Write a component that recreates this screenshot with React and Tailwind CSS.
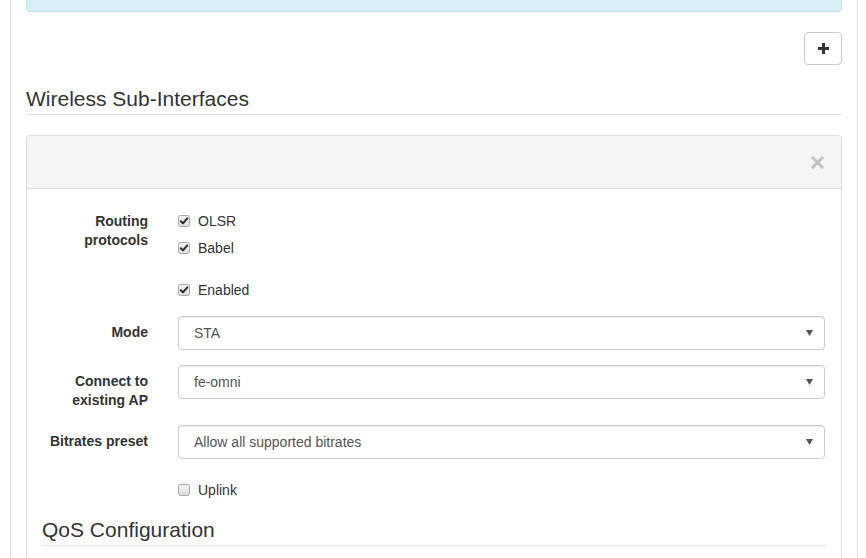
import React from "react";

function Check({ checked }) {
  return (
    <svg width="12" height="12" viewBox="0 0 12 12" className="shrink-0">
      <defs>
        <linearGradient id={checked ? "gc" : "gu"} x1="0" y1="0" x2="0" y2="1">
          <stop offset="0" stopColor="#f4f4f4" />
          <stop offset="1" stopColor="#dedede" />
        </linearGradient>
      </defs>
      <rect x="0.5" y="0.5" width="11" height="11" rx="2" fill={`url(#${checked ? "gc" : "gu"})`} stroke="#a9a9a9" />
      {checked && (
        <path d="M2.8 6.2 L5 8.4 L9.3 3.4" fill="none" stroke="#2b2b2b" strokeWidth="2" strokeLinecap="round" strokeLinejoin="round" />
      )}
    </svg>
  );
}

function CheckItem({ checked, label, className = "" }) {
  return (
    <div className={`flex items-center h-[20px] ${className}`}>
      <Check checked={checked} />
      <span className="ml-[8px] text-[14px] leading-[20px] text-[#333]">{label}</span>
    </div>
  );
}

function Select({ value }) {
  return (
    <div className="flex-1 mr-[1px] h-[34px] border border-[#ccc] rounded-[4px] shadow-[inset_0_1px_1px_rgba(0,0,0,0.075)] bg-white flex items-center pl-[15px] pr-[11px]">
      <span className="flex-1 text-[14px] text-[#555]">{value}</span>
      <svg width="7" height="6" viewBox="0 0 7 6">
        <path d="M0 0 H7 L3.5 6 Z" fill="#555" />
      </svg>
    </div>
  );
}

function Label({ children, className = "" }) {
  return (
    <div className={`w-[106px] shrink-0 text-right font-bold text-[14px] leading-[19px] text-[#333] ${className}`}>
      {children}
    </div>
  );
}

export default function App() {
  return (
    <div className="w-[866px] h-[558px] overflow-hidden bg-white" style={{ fontFamily: '"Liberation Sans", Arial, sans-serif' }}>
      <div className="ml-[10px] w-[848px] h-[558px] border-x border-[#ddd] px-[15px]">
        <div className="h-[12px] bg-[#d9edf7] border-x border-b border-[#bce8f1] rounded-b-[4px]" />
        <div className="flex justify-end mt-[20px]">
          <div className="w-[38px] h-[33px] border border-[#ccc] rounded-[4px] bg-white flex items-center justify-center">
            <svg width="11" height="11" viewBox="0 0 11 11">
              <path d="M4 0 H7 V4 H11 V7 H7 V11 H4 V7 H0 V4 H4 Z" fill="#333" />
            </svg>
          </div>
        </div>
        <div className="mt-[19px] h-[31px] border-b border-[#e5e5e5] text-[21px] leading-[30px] text-[#333]">
          Wireless Sub-Interfaces
        </div>
        <div className="mt-[20px] border border-[#ddd] rounded-[4px] h-[500px]">
          <div className="h-[53px] bg-[#f5f5f5] border-b border-[#ddd] rounded-t-[4px] flex items-center justify-end pr-[16px]">
            <svg width="15" height="15" viewBox="0 0 15 15" className="mt-[1px]">
              <path d="M2 2 L13 13 M13 2 L2 13" stroke="#c2c2c2" strokeWidth="3" />
            </svg>
          </div>
          <div className="px-[15px] pt-[22px]">
            <div className="flex">
              <Label className="pt-[1px]">Routing protocols</Label>
              <div className="ml-[30px] flex flex-col gap-[7px]">
                <CheckItem checked label="OLSR" />
                <CheckItem checked label="Babel" />
              </div>
            </div>
            <div className="flex mt-[22px]">
              <Label />
              <div className="ml-[30px]">
                <CheckItem checked label="Enabled" />
              </div>
            </div>
            <div className="flex mt-[16px]">
              <Label className="pt-[7px]">Mode</Label>
              <div className="ml-[30px] flex-1 flex">
                <Select value="STA" />
              </div>
            </div>
            <div className="flex mt-[15px]">
              <Label className="pt-[7px]">Connect to existing AP</Label>
              <div className="ml-[30px] flex-1 flex items-start">
                <Select value="fe-omni" />
              </div>
            </div>
            <div className="flex mt-[15px]">
              <Label className="pt-[7px]">Bitrates preset</Label>
              <div className="ml-[30px] flex-1 flex">
                <Select value="Allow all supported bitrates" />
              </div>
            </div>
            <div className="flex mt-[21px]">
              <Label />
              <div className="ml-[30px]">
                <CheckItem label="Uplink" />
              </div>
            </div>
            <div className="mt-[15px] h-[31px] border-b border-[#e5e5e5] text-[21px] leading-[30px] text-[#333]">
              QoS Configuration
            </div>
          </div>
        </div>
      </div>
    </div>
  );
}
